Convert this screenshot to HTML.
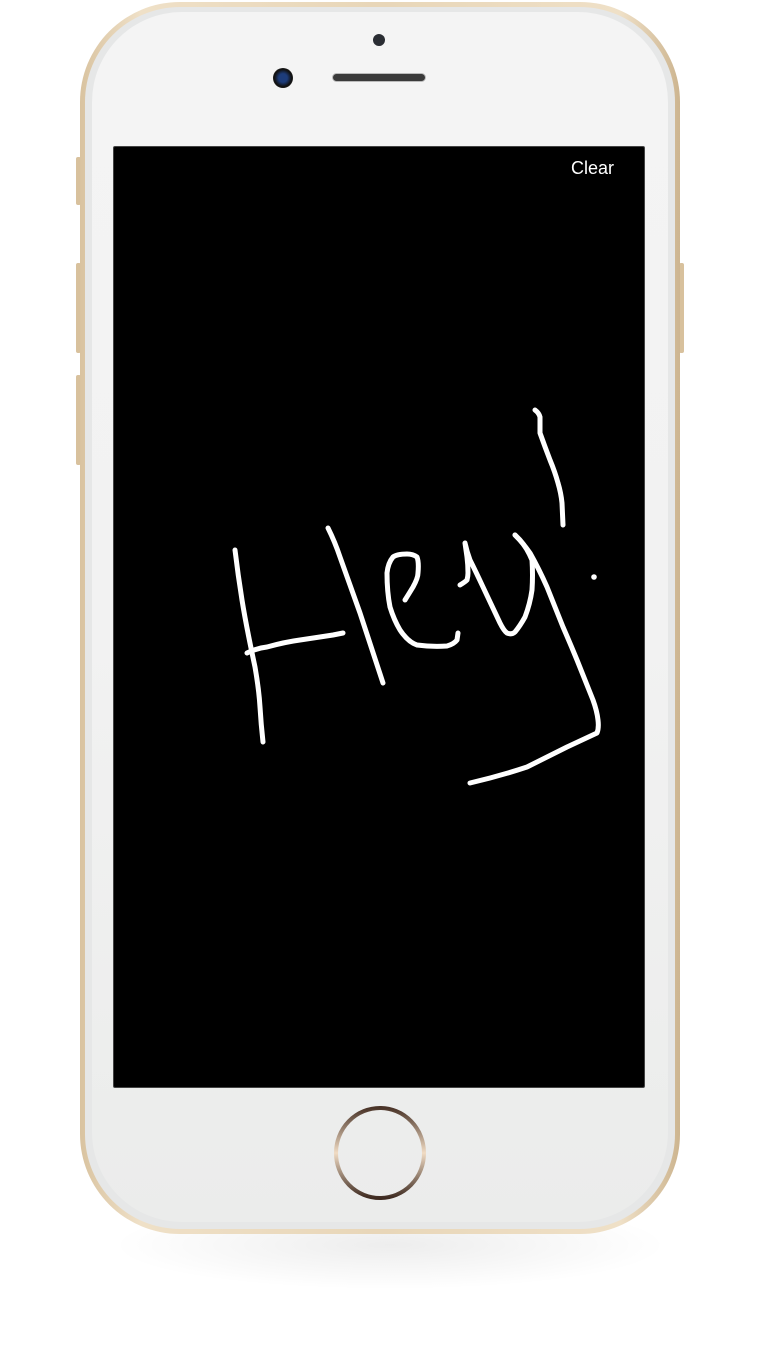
<!DOCTYPE html>
<html><head><meta charset="utf-8"><style>
html,body{margin:0;padding:0;background:#fff;}
body{width:774px;height:1358px;position:relative;overflow:hidden;font-family:"Liberation Sans",sans-serif;}
.shadow{position:absolute;left:110px;top:1200px;width:560px;height:90px;border-radius:50%;background:radial-gradient(ellipse at center,rgba(0,0,0,0.07),rgba(0,0,0,0) 70%);}
.frame{position:absolute;left:80px;top:2px;width:600px;height:1232px;border-radius:100px;background:linear-gradient(90deg,#d9c3a0,#efe0c7 10%,#e8d6b8 50%,#efe0c7 90%,#cdb590);}
.body{position:absolute;left:85px;top:7px;width:590px;height:1222px;border-radius:95px;background:#e6e7e7;}
.face{position:absolute;left:92px;top:12px;width:576px;height:1210px;border-radius:90px;background:linear-gradient(#f4f4f4,#f2f2f2 50%,#ebeceb);}
.screen{position:absolute;left:113px;top:146px;width:532px;height:942px;background:#000;border:1px solid #444;box-sizing:border-box;border-radius:2px;}
.clear{position:absolute;left:571px;top:158px;color:#fff;font-size:18px;}
.btn{position:absolute;border-radius:2px;background:#d8c19d;}
</style></head><body>
<div class="shadow"></div>
<div class="btn" style="left:76px;top:157px;width:5px;height:48px"></div>
<div class="btn" style="left:76px;top:263px;width:5px;height:90px"></div>
<div class="btn" style="left:76px;top:375px;width:5px;height:90px"></div>
<div class="btn" style="left:679px;top:263px;width:5px;height:90px"></div>
<div class="frame"></div>
<div class="body"></div>
<div class="face"></div>
<div style="position:absolute;left:373px;top:34px;width:12px;height:12px;border-radius:50%;background:#2a2d33"></div>
<div style="position:absolute;left:273px;top:68px;width:20px;height:20px;border-radius:50%;background:radial-gradient(circle,#1d3c7a 30%,#111 60%,#333)"></div>
<div style="position:absolute;left:332px;top:73px;width:94px;height:9px;border-radius:5px;background:#3a3a3a;border:1px solid #bbb;box-sizing:border-box"></div>
<div class="screen"></div>
<div class="clear">Clear</div>
<svg style="position:absolute;left:0;top:0" width="774" height="1358" fill="none" stroke="#fff" stroke-width="5" stroke-linecap="round" stroke-linejoin="round">
<defs><linearGradient id="g" x1="0" y1="0" x2="0" y2="1"><stop offset="0" stop-color="#4a3428"/><stop offset="0.5" stop-color="#f1dcc4"/><stop offset="1" stop-color="#3e2a20"/></linearGradient></defs>
<path d="M235,550 Q238,575 242,600 T255,667 Q259,690 260,707 T263,742"/>
<path d="M247,653 Q257,648 267,647 Q285,642 300,640 Q320,637 333,635 L343,633"/>
<path d="M328,528 Q335,542 340,557 Q350,585 360,613 L383,683"/>
<path d="M405,600 Q410,592 413,587 Q418,578 418,573 Q419,562 417,557 Q413,554 407,554 Q397,554 393,557 Q388,563 387,573 Q387,592 390,607 Q394,620 400,630 Q408,642 417,645 Q432,647 447,646 Q454,644 457,640 L458,633"/>
<path d="M460,585 Q465,582 467,580 Q468,576 468,573 Q468,565 467,557 L465,543 Q467,552 470,560 Q476,572 483,587 Q492,606 500,623 Q504,631 507,633 Q512,635 515,632 Q520,626 525,617 Q530,604 532,590 Q533,575 532,560 Q527,548 520,540 L515,535"/>
<path d="M515,535 Q523,543 530,553 Q539,569 547,587 Q555,607 563,627 Q570,643 577,660 Q585,680 593,700 Q597,711 598,720 Q599,728 597,733 Q582,740 567,747 Q547,757 527,767 Q500,776 470,783"/>
<path d="M535,410 Q539,413 540,417 L540,433 Q545,447 550,460 Q555,472 558,483 Q561,493 562,503 L563,525"/>
<circle cx="594" cy="577" r="2.8" fill="#fff" stroke="none"/>
<ellipse cx="380" cy="1153" rx="44" ry="45" stroke="url(#g)" stroke-width="4"/>
</svg>
</body></html>
